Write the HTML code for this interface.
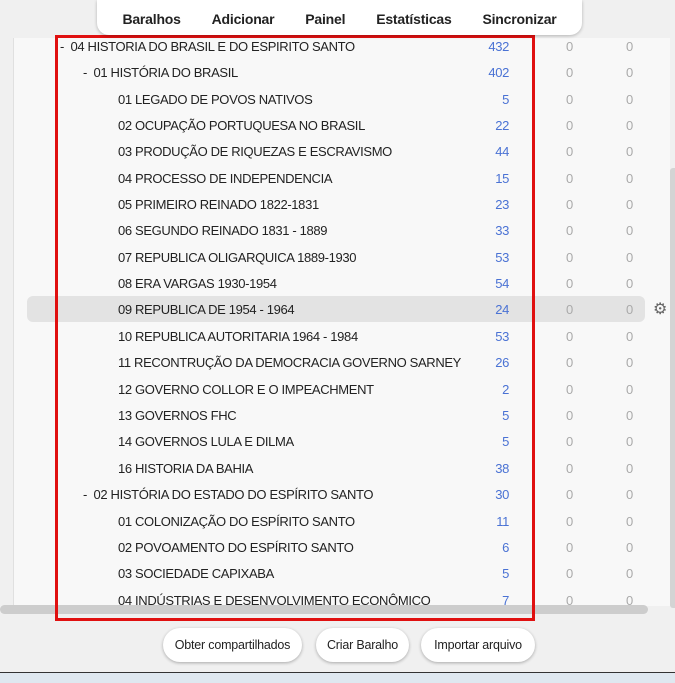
<!DOCTYPE html>
<html><head><meta charset="utf-8"><style>
*{margin:0;padding:0;box-sizing:border-box}
body{width:675px;height:683px;background:#f0f0f0;font-family:"Liberation Sans",sans-serif;position:relative;overflow:hidden;}
.panel{position:absolute;left:13px;top:38px;width:657px;height:568px;background:#f8f8f8;border-left:1px solid #e0e0e0}
.nav{position:absolute;left:97px;top:0;width:485px;height:35px;background:#fff;border-radius:0 0 12px 12px;box-shadow:0 1px 3px rgba(0,0,0,.25);display:flex;justify-content:space-around;align-items:center;padding:2px 10px 0;font-weight:bold;font-size:14px;letter-spacing:-0.2px;color:#222}
.row{position:absolute;left:0;width:675px;height:26px;font-size:13px;letter-spacing:-0.35px;color:#222;line-height:28px}
.row span{position:absolute;white-space:nowrap}
.n{color:#4a72d4;right:166px;text-align:right}
.z1{color:#aaa;left:566px}.z2{color:#aaa;left:626px}
.hl{position:absolute;left:27px;top:296px;width:618px;height:26px;background:#e3e3e3;border-radius:6px}
.red{position:absolute;left:55px;top:35px;width:480px;height:586px;border:3px solid #e01010}
.hs{position:absolute;left:0;top:605px;width:648px;height:9px;background:#cdcdcd;border-radius:5px}
.vs{position:absolute;left:670px;top:168px;width:5px;height:440px;background:#d4d4d4;border-radius:3px 0 0 3px}
.btn{position:absolute;top:628px;height:34px;background:#fff;border-radius:17px;box-shadow:0 1px 3px rgba(0,0,0,.3);font-size:12.5px;letter-spacing:-0.2px;color:#222;display:flex;align-items:center;justify-content:center}
.bot{position:absolute;left:0;top:672px;width:675px;height:11px;background:#dfe8f0;border-top:1px solid #333}
</style></head><body>
<div class="panel"></div>
<div class="hl"></div>
<div class="vs"></div>
<div class="row" style="top:33px"><span style="left:60px">-&nbsp;&nbsp;04 HISTORIA DO BRASIL E DO ESPIRITO SANTO</span><span class="n">432</span><span class="z1">0</span><span class="z2">0</span></div>
<div class="row" style="top:59px"><span style="left:83px">-&nbsp;&nbsp;01 HISTÓRIA DO BRASIL</span><span class="n">402</span><span class="z1">0</span><span class="z2">0</span></div>
<div class="row" style="top:86px"><span style="left:118px">01 LEGADO DE POVOS NATIVOS</span><span class="n">5</span><span class="z1">0</span><span class="z2">0</span></div>
<div class="row" style="top:112px"><span style="left:118px">02 OCUPAÇÃO PORTUQUESA NO BRASIL</span><span class="n">22</span><span class="z1">0</span><span class="z2">0</span></div>
<div class="row" style="top:138px"><span style="left:118px">03 PRODUÇÃO DE RIQUEZAS E ESCRAVISMO</span><span class="n">44</span><span class="z1">0</span><span class="z2">0</span></div>
<div class="row" style="top:165px"><span style="left:118px">04 PROCESSO DE INDEPENDENCIA</span><span class="n">15</span><span class="z1">0</span><span class="z2">0</span></div>
<div class="row" style="top:191px"><span style="left:118px">05 PRIMEIRO REINADO 1822-1831</span><span class="n">23</span><span class="z1">0</span><span class="z2">0</span></div>
<div class="row" style="top:217px"><span style="left:118px">06 SEGUNDO REINADO 1831 - 1889</span><span class="n">33</span><span class="z1">0</span><span class="z2">0</span></div>
<div class="row" style="top:244px"><span style="left:118px">07 REPUBLICA OLIGARQUICA 1889-1930</span><span class="n">53</span><span class="z1">0</span><span class="z2">0</span></div>
<div class="row" style="top:270px"><span style="left:118px">08 ERA VARGAS 1930-1954</span><span class="n">54</span><span class="z1">0</span><span class="z2">0</span></div>
<div class="row" style="top:296px"><span style="left:118px">09 REPUBLICA DE 1954 - 1964</span><span class="n">24</span><span class="z1">0</span><span class="z2">0</span><span style="left:653px;color:#666;font-size:16px">⚙</span></div>
<div class="row" style="top:323px"><span style="left:118px">10 REPUBLICA AUTORITARIA 1964 - 1984</span><span class="n">53</span><span class="z1">0</span><span class="z2">0</span></div>
<div class="row" style="top:349px"><span style="left:118px">11 RECONTRUÇÃO DA DEMOCRACIA GOVERNO SARNEY</span><span class="n">26</span><span class="z1">0</span><span class="z2">0</span></div>
<div class="row" style="top:376px"><span style="left:118px">12 GOVERNO COLLOR E O IMPEACHMENT</span><span class="n">2</span><span class="z1">0</span><span class="z2">0</span></div>
<div class="row" style="top:402px"><span style="left:118px">13 GOVERNOS FHC</span><span class="n">5</span><span class="z1">0</span><span class="z2">0</span></div>
<div class="row" style="top:428px"><span style="left:118px">14 GOVERNOS LULA E DILMA</span><span class="n">5</span><span class="z1">0</span><span class="z2">0</span></div>
<div class="row" style="top:455px"><span style="left:118px">16 HISTORIA DA BAHIA</span><span class="n">38</span><span class="z1">0</span><span class="z2">0</span></div>
<div class="row" style="top:481px"><span style="left:83px">-&nbsp;&nbsp;02 HISTÓRIA DO ESTADO DO ESPÍRITO SANTO</span><span class="n">30</span><span class="z1">0</span><span class="z2">0</span></div>
<div class="row" style="top:508px"><span style="left:118px">01 COLONIZAÇÃO DO ESPÍRITO SANTO</span><span class="n">11</span><span class="z1">0</span><span class="z2">0</span></div>
<div class="row" style="top:534px"><span style="left:118px">02 POVOAMENTO DO ESPÍRITO SANTO</span><span class="n">6</span><span class="z1">0</span><span class="z2">0</span></div>
<div class="row" style="top:560px"><span style="left:118px">03 SOCIEDADE CAPIXABA</span><span class="n">5</span><span class="z1">0</span><span class="z2">0</span></div>
<div class="row" style="top:587px"><span style="left:118px">04 INDÚSTRIAS E DESENVOLVIMENTO ECONÔMICO</span><span class="n">7</span><span class="z1">0</span><span class="z2">0</span></div>
<div style="position:absolute;left:0;top:614px;width:675px;height:58px;background:#f0f0f0"></div>
<div class="hs"></div>
<div class="red"></div>
<div class="nav"><span>Baralhos</span><span>Adicionar</span><span>Painel</span><span>Estatísticas</span><span>Sincronizar</span></div>
<div class="btn" style="left:163px;width:139px">Obter compartilhados</div>
<div class="btn" style="left:316px;width:93px">Criar Baralho</div>
<div class="btn" style="left:421px;width:114px">Importar arquivo</div>
<div class="bot"></div>
</body></html>
